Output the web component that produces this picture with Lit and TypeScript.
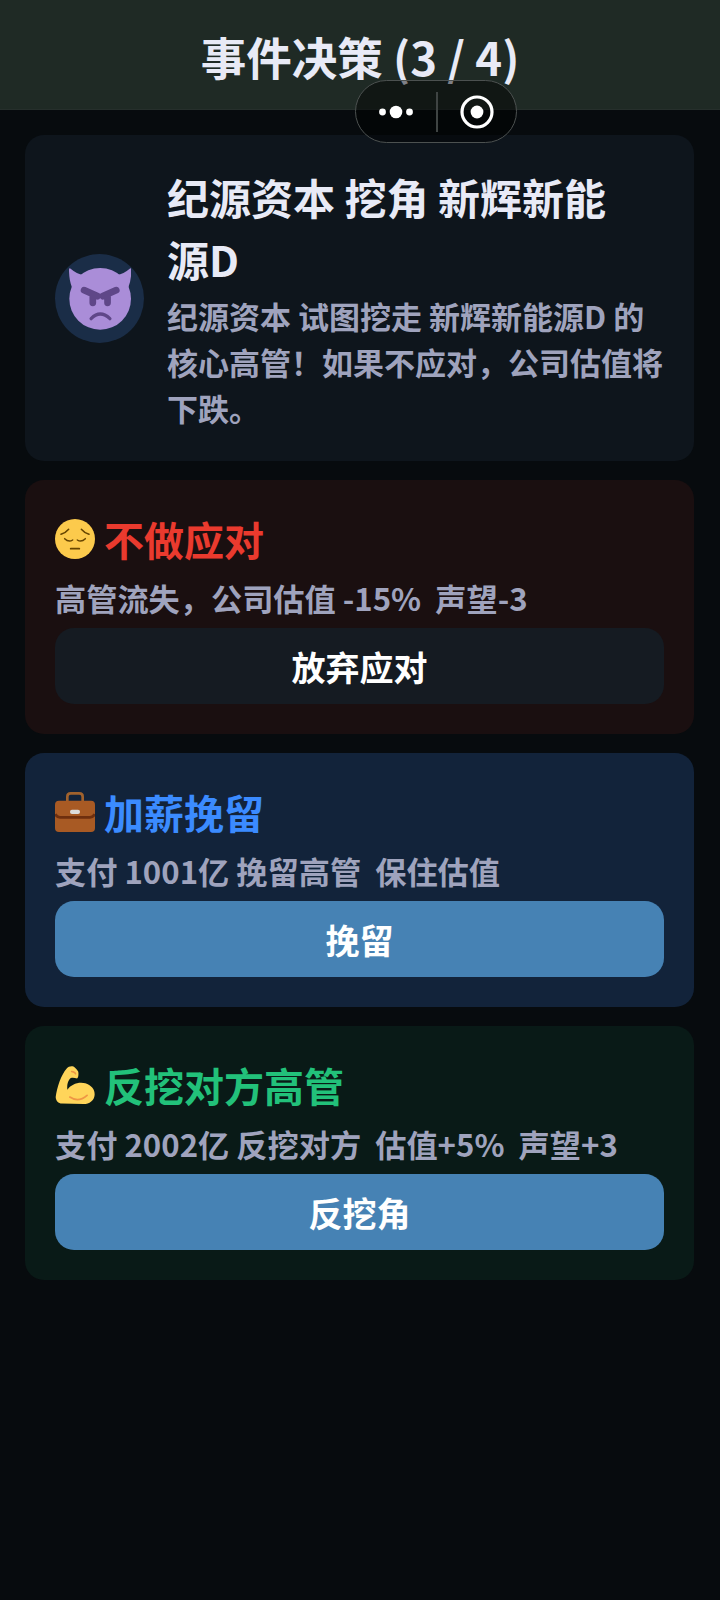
import { LitElement, html, css, svg } from 'lit';
import { customElement } from 'lit/decorators.js';

const devil = svg`<svg class="face" viewBox="117 120 185 185">
  <path fill="#aa8dd8" d="M122 122Q116 118 117 130Q118 160 126 178L160 140Q140 138 122 122Z"/>
  <path fill="#aa8dd8" d="M298 122Q304 118 303 130Q302 160 294 178L260 140Q280 138 298 122Z"/>
  <circle cx="210" cy="212" r="92" fill="#aa8dd8"/>
  <g fill="none" stroke="#5f4788" stroke-linecap="round">
    <path stroke-width="20" d="M162 186L202 204M188 200V224M258 186L218 204M232 200V224"/>
    <path stroke-width="10" d="M183 271Q210 244 239 271"/>
  </g>
</svg>`;

const pensive = svg`<svg class="emoji" viewBox="9 9 120 120">
  <circle cx="69" cy="69" r="60" fill="#fcca4c"/>
  <g fill="none" stroke="#664500" stroke-linecap="round">
    <path stroke-width="4.5" d="M27 55Q42 50 50 40M111 55Q96 50 88 40"/>
    <path stroke-width="4.5" d="M38 68Q50 80 62 72M100 68Q88 80 76 72"/>
    <path stroke-width="5" d="M56 98H82"/>
  </g>
</svg>`;

const briefcase = svg`<svg class="emoji" viewBox="45 42 120 120">
  <path fill="none" stroke="#a0622d" stroke-width="8" d="M82 72V56Q82 46 92 46H118Q128 46 128 56V72"/>
  <rect x="45" y="68" width="120" height="94" rx="12" fill="#a85a24"/>
  <path fill="none" stroke="#6f2f0e" stroke-width="8" d="M46 108Q50 118 60 118H150Q160 118 164 108"/>
  <rect x="90" y="95" width="30" height="13" rx="6" fill="#dcdcdc"/>
</svg>`;

const muscle = svg`<svg class="emoji" viewBox="12 12 116 116">
  <path fill="#ffd55a" d="M14 105C18 75 30 40 46 22C52 15 64 13 70 20C75 25 81 30 80 36C80 42 80 48 76 51C70 50 64 47 58 50C50 55 46 70 48 84C58 68 80 60 100 65C116 70 128 82 127 98C126 115 112 125 95 125L32 124C22 124 14 116 14 105Z"/>
  <path fill="none" stroke="#ef9645" stroke-width="5" stroke-linecap="round" d="M55 105Q80 122 105 100"/>
  <path fill="none" stroke="#ef9645" stroke-width="4" stroke-linecap="round" d="M60 31Q70 32 72 38"/>
</svg>`;

@customElement('app-root')
export class AppRoot extends LitElement {
  static styles = css`
    :host {
      display: block;
      min-height: 1600px;
      background: #070b0e;
      font-family: "Noto Sans CJK SC", "Noto Sans", sans-serif;
      font-weight: 700;
      position: relative;
    }
    .header {
      height: 110px;
      box-sizing: border-box;
      background: #1f2a25;
      border-bottom: 1px solid #262f2c;
      display: flex;
      justify-content: center;
      padding-top: 23px;
      font-size: 45.5px;
      line-height: 66px;
      color: #e8eaf6;
    }
    .capsule {
      position: absolute;
      left: 355px;
      top: 80px;
      width: 162px;
      height: 63px;
      box-sizing: border-box;
      border: 1.5px solid #4c5150;
      border-radius: 32px;
      background: rgba(0, 0, 0, 0.45);
      display: flex;
      align-items: center;
    }
    .capsule svg { display: block; }
    .dots { width: 80px; display: flex; justify-content: center; }
    .sep { width: 2px; height: 40px; background: #3f4443; }
    .target { flex: 1; display: flex; justify-content: center; }
    .content {
      display: flex;
      flex-direction: column;
      gap: 19px;
      padding: 25px 26px 0 25px;
    }
    .card {
      border-radius: 19px;
      padding: 29px 30px 30px;
    }
    .intro {
      background: #0e151c;
      display: flex;
      align-items: center;
      gap: 23px;
      padding: 31px 30px 30px;
    }
    .avatar {
      width: 89px;
      height: 89px;
      flex: none;
      border-radius: 50%;
      background: #1a2d47;
      display: flex;
      align-items: center;
      justify-content: center;
    }
    .face { width: 62px; height: 62px; }
    .intro h2 {
      margin: 0 0 3px;
      font-size: 42px;
      line-height: 62px;
      color: #e8eaf6;
    }
    .nowrap { white-space: nowrap; }
    .intro p {
      margin: 0;
      font-size: 31px;
      line-height: 46px;
      color: #9fa3bd;
    }
    .option-title {
      display: flex;
      align-items: center;
      gap: 9px;
      font-size: 40px;
      line-height: 60px;
    }
    .emoji { width: 40px; height: 40px; flex: none; }
    .option-desc {
      font-size: 31.2px;
      line-height: 46px;
      color: #9fa3bd;
      white-space: pre;
      margin: 6px 0 7px;
    }
    .btn {
      height: 76px;
      border-radius: 19px;
      display: flex;
      align-items: center;
      justify-content: center;
      font-size: 34px;
      color: #fff;
      background: #4682b4;
    }
    .ignore { background: #1a0f10; }
    .ignore .option-title { color: #ea3a2e; }
    .ignore .btn { background: #151b22; }
    .keep { background: #12233a; }
    .keep .option-title { color: #3b8bff; }
    .counter { background: #091a17; }
    .counter .option-title { color: #22c17a; }
  `;

  render() {
    return html`
      <div class="header">事件决策 (3 / 4)</div>
      <div class="capsule">
        <div class="dots">
          <svg width="34" height="14" viewBox="0 0 34 14" fill="#fff">
            <circle cx="3.5" cy="7" r="3.4"/><circle cx="17" cy="7" r="6.3"/><circle cx="30.5" cy="7" r="3.4"/>
          </svg>
        </div>
        <div class="sep"></div>
        <div class="target">
          <svg width="34" height="34" viewBox="0 0 34 34">
            <circle cx="17" cy="17" r="15" fill="none" stroke="#fff" stroke-width="3.2"/>
            <circle cx="17" cy="17" r="6.4" fill="#fff"/>
          </svg>
        </div>
      </div>
      <div class="content">
        <div class="card intro">
          <div class="avatar">${devil}</div>
          <div>
            <h2>纪源资本 挖角 新辉新能<span class="nowrap">源D</span></h2>
            <p>纪源资本 试图挖走 新辉新能源D 的核心高管！如果不应对，公司估值将下跌。</p>
          </div>
        </div>
        <div class="card ignore">
          <div class="option-title">${pensive}不做应对</div>
          <div class="option-desc">高管流失，公司估值 -15%  声望-3</div>
          <div class="btn">放弃应对</div>
        </div>
        <div class="card keep">
          <div class="option-title">${briefcase}加薪挽留</div>
          <div class="option-desc">支付 1001亿 挽留高管  保住估值</div>
          <div class="btn">挽留</div>
        </div>
        <div class="card counter">
          <div class="option-title">${muscle}反挖对方高管</div>
          <div class="option-desc">支付 2002亿 反挖对方  估值+5%  声望+3</div>
          <div class="btn">反挖角</div>
        </div>
      </div>
    `;
  }
}
